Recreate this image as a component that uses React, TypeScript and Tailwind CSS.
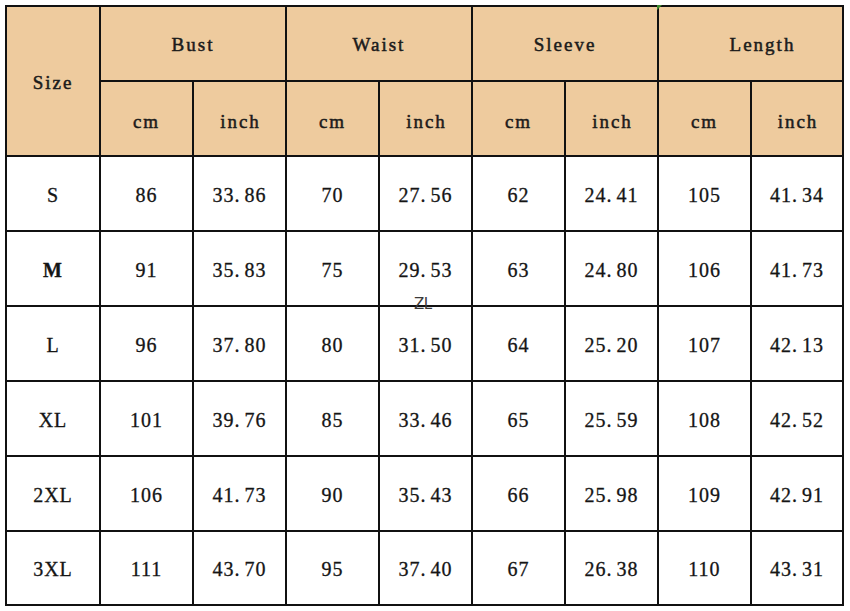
import React from 'react';

const groups = ['Bust', 'Waist', 'Sleeve', 'Length'];

const rows: [string, string[]][] = [
  ['S', ['86', '33.86', '70', '27.56', '62', '24.41', '105', '41.34']],
  ['M', ['91', '35.83', '75', '29.53', '63', '24.80', '106', '41.73']],
  ['L', ['96', '37.80', '80', '31.50', '64', '25.20', '107', '42.13']],
  ['XL', ['101', '39.76', '85', '33.46', '65', '25.59', '108', '42.52']],
  ['2XL', ['106', '41.73', '90', '35.43', '66', '25.98', '109', '42.91']],
  ['3XL', ['111', '43.70', '95', '37.40', '67', '26.38', '110', '43.31']],
];

// SimSun-style numbers: the dot takes a full character cell
function Num({ value }: { value: string }) {
  const [a, b] = value.split('.');
  if (b === undefined) return <span>{value}</span>;
  return (
    <span className="inline-flex items-baseline">
      <span>{a}</span>
      <span className="inline-block w-[10px] text-left">.</span>
      <span>{b}</span>
    </span>
  );
}

export default function App() {
  const head =
    "bg-[#eecb9e] flex items-center justify-center font-['Liberation_Serif',serif] text-[19px] tracking-[2px] text-[#1b1b1b] [-webkit-text-stroke:0.5px_#1b1b1b]";
  const cell =
    "bg-white flex items-center justify-center font-['Liberation_Serif',serif] text-[20px] tracking-[1px] text-[#151515] [-webkit-text-stroke:0.3px_#151515]";

  return (
    <div className="w-[850px] h-[611px] bg-white relative">
      <div className="absolute left-[5px] top-[5px] w-[839px] h-[601px] bg-[#111] p-[2px]">
        <div className="grid grid-cols-[92px_repeat(7,91px)_90px] grid-rows-[73px_73px_repeat(5,73px)_72px] gap-[2px] w-full h-full">
          <div className={`${head} row-span-2 pt-[5px]`}>Size</div>
          {groups.map((g) => (
            <div key={g} className={`${head} col-span-2 pt-[4px] ${g === 'Length' ? 'pl-[24px]' : ''}`}>{g}</div>
          ))}
          {groups.map((g) => (
            <React.Fragment key={g + 'u'}>
              <div className={`${head} pt-[7px]`}>cm</div>
              <div className={`${head} pt-[7px] pl-[2px]`}>inch</div>
            </React.Fragment>
          ))}
          {rows.map(([size, vals]) => (
            <React.Fragment key={size}>
              <div className={`${cell} text-[19px] pt-[2px] ${size === 'M' ? 'font-bold' : ''}`}>{size}</div>
              {vals.map((v, i) => (
                <div key={i} className={`${cell} pt-[2px]`}>
                  <Num value={v} />
                </div>
              ))}
            </React.Fragment>
          ))}
        </div>
      </div>

      {/* small green mark on the header edge */}
      <svg className="absolute left-[657px] top-[5px]" width="5" height="5" viewBox="0 0 5 5">
        <polygon points="0,0 5,0 0,5" fill="#3c8a2e" />
      </svg>

      {/* watermark */}
      <span className="absolute left-[414px] top-[297px] font-['DejaVu_Sans',sans-serif] text-[15px] leading-none text-[#3a3a3a] tracking-[-0.5px]">
        ZL
      </span>
    </div>
  );
}
